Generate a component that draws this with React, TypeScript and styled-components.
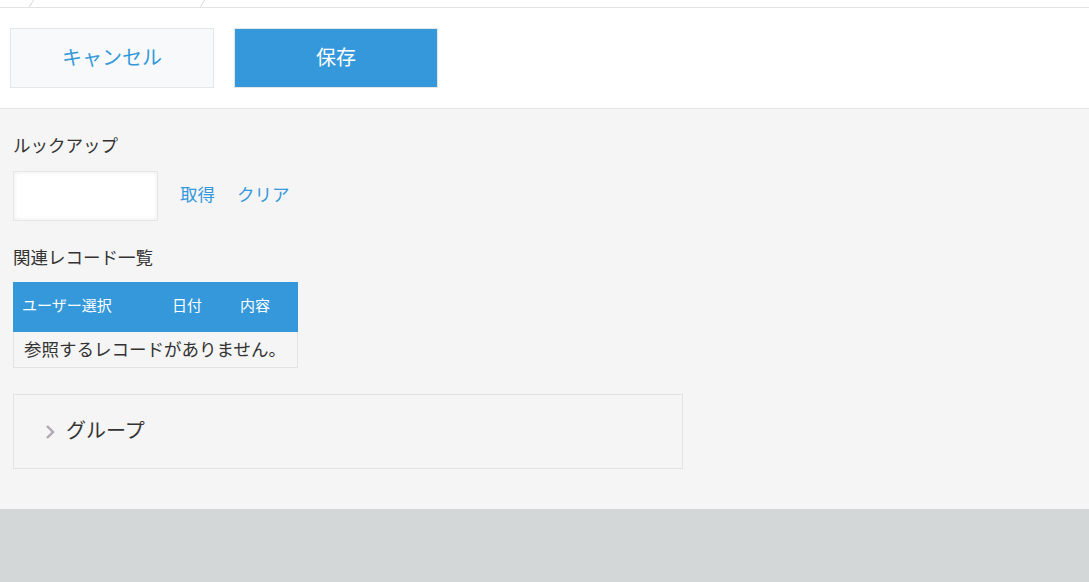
import React from "react";
import styled, { createGlobalStyle } from "styled-components";

const Global = createGlobalStyle`
  html, body { margin: 0; padding: 0; }
  body {
    font-family: "Noto Sans CJK JP", "Noto Sans", sans-serif;
    color: #333;
    background: #d4d7d7;
  }
  * { box-sizing: border-box; }
`;

const Page = styled.div`
  display: flex;
  flex-direction: column;
  width: 1089px;
  height: 582px;
  overflow: hidden;
`;

const TabStrip = styled.div`
  display: flex;
  height: 8px;
  background: #fff;
  border-bottom: 1px solid #e3e3e3;
  padding-left: 33px;
  overflow: hidden;
`;

const Tab = styled.div`
  width: 172px;
  height: 7px;
  border-left: 1px solid #d6d6d6;
  border-right: 1px solid #d6d6d6;
  transform: skewX(-30deg);
  transform-origin: top left;
`;

const Toolbar = styled.div`
  display: flex;
  gap: 20px;
  height: 101px;
  padding: 20px 0 0 10px;
  background: #fff;
  border-bottom: 1px solid #e3e3e3;
`;

const ActionButton = styled.button<{ $primary?: boolean }>`
  width: 204px;
  height: 60px;
  border: 1px solid #e3e7e8;
  background: ${(p) => (p.$primary ? "#3498db" : "#f7f9fa")};
  color: ${(p) => (p.$primary ? "#fff" : "#3498db")};
  font-family: inherit;
  font-size: 20px;
  padding: 0 0 3px;
  cursor: pointer;
`;

const Content = styled.div`
  display: flex;
  flex-direction: column;
  align-items: flex-start;
  background: #f5f5f5;
  padding: 24px 13px 40px;
`;

const FieldLabel = styled.div<{ $gap?: number }>`
  font-size: 17.5px;
  line-height: 24px;
  color: #333;
  margin-top: ${(p) => p.$gap ?? 0}px;
`;

const LookupRow = styled.div`
  display: flex;
  align-items: center;
  margin-top: 14px;
`;

const TextInput = styled.input`
  width: 145px;
  height: 50px;
  border: 1px solid #e3e7e8;
  background: #fff;
  box-shadow: inset 0 0 4px 1px #f2f2f2;
  outline: none;
  font-size: 17.5px;
  padding: 0 8px;
`;

const LinkButton = styled.button`
  border: none;
  background: none;
  color: #3498db;
  font-family: inherit;
  font-size: 17.5px;
  line-height: 24px;
  padding: 0 0 5px 22px;
  cursor: pointer;
`;

const Table = styled.div`
  display: flex;
  flex-direction: column;
  width: 285px;
  margin-top: 13px;
`;

const HeadRow = styled.div`
  display: grid;
  grid-template-columns: 150px 68px 67px;
  height: 50px;
  background: #3498db;
`;

const HeadCell = styled.div`
  display: flex;
  align-items: center;
  padding: 0 0 5px 9px;
  color: #fff;
  font-size: 15px;
`;

const EmptyRow = styled.div`
  height: 36px;
  display: flex;
  align-items: center;
  padding: 0 0 3px 10px;
  border: 1px solid #e3e3e3;
  border-top: none;
  font-size: 17.5px;
  color: #333;
`;

const GroupBox = styled.div`
  display: flex;
  align-items: center;
  gap: 10px;
  width: 670px;
  height: 75px;
  margin-top: 26px;
  padding-left: 31px;
  border: 1px solid #e3e3e3;
  color: #333;
`;

const GroupTitle = styled.span`
  font-size: 20px;
  padding-bottom: 5px;
`;

const Footer = styled.div`
  flex: 1;
  background: #d4d7d7;
`;

const Chevron = () => (
  <svg width="11" height="16" viewBox="0 0 11 16" style={{ marginTop: 1 }}>
    <path d="M2 2 L8 8 L2 14" fill="none" stroke="#aca7b3" strokeWidth="2.4" />
  </svg>
);

export default function App() {
  return (
    <Page>
      <Global />
      <TabStrip>
        <Tab />
      </TabStrip>
      <Toolbar>
        <ActionButton>キャンセル</ActionButton>
        <ActionButton $primary>保存</ActionButton>
      </Toolbar>
      <Content>
        <FieldLabel>ルックアップ</FieldLabel>
        <LookupRow>
          <TextInput />
          <LinkButton>取得</LinkButton>
          <LinkButton>クリア</LinkButton>
        </LookupRow>
        <FieldLabel $gap={24}>関連レコード一覧</FieldLabel>
        <Table>
          <HeadRow>
            <HeadCell>ユーザー選択</HeadCell>
            <HeadCell>日付</HeadCell>
            <HeadCell>内容</HeadCell>
          </HeadRow>
          <EmptyRow>参照するレコードがありません。</EmptyRow>
        </Table>
        <GroupBox>
          <Chevron />
          <GroupTitle>グループ</GroupTitle>
        </GroupBox>
      </Content>
      <Footer />
    </Page>
  );
}
